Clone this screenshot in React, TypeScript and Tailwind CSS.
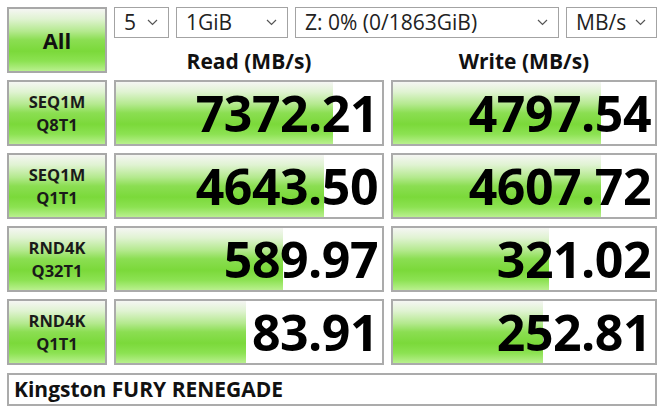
import React from "react";

const GRAD =
  "bg-[linear-gradient(180deg,#f5f6f3_0%,#e0f3d2_16%,#b4e98e_36%,#8bde52_50%,#7bd93a_68%,#8ce252_84%,#b9f08e_100%)]";

function Chevron() {
  return (
    <svg width="11" height="7" viewBox="0 0 11 7" className="shrink-0">
      <polyline points="1,1 5.5,5.5 10,1" fill="none" stroke="#555" strokeWidth="1.2" />
    </svg>
  );
}

function Select({ w, label }: { w: string; label: string }) {
  return (
    <div
      className={`${w} h-[31px] border border-[#a3a3a3] bg-white flex items-center justify-between pl-[9px] pr-[10px] text-[21px] text-[#222] leading-none`}
    >
      <span>{label}</span>
      <Chevron />
    </div>
  );
}

function Label({ a, b }: { a: string; b: string }) {
  return (
    <div
      className={`h-[66px] border-2 border-[#a8a8a8] ${GRAD} flex flex-col items-center justify-center text-[16.5px] font-bold text-[#1a1a1a] leading-[23px]`}
    >
      <span>{a}</span>
      <span>{b}</span>
    </div>
  );
}

function Bar({ value, fill }: { value: string; fill: number }) {
  return (
    <div className="relative h-[66px] border-2 border-[#ababab] bg-white overflow-hidden">
      <div className={`absolute left-0 top-0 bottom-0 ${GRAD}`} style={{ width: fill }} />
      <div className="relative h-full flex items-center justify-end pr-[4px] text-[50px] font-bold text-black leading-none tracking-[-0.5px]">
        {value}
      </div>
    </div>
  );
}

const rows = [
  { a: "SEQ1M", b: "Q8T1", r: "7372.21", rf: 217, w: "4797.54", wf: 208 },
  { a: "SEQ1M", b: "Q1T1", r: "4643.50", rf: 208, w: "4607.72", wf: 208 },
  { a: "RND4K", b: "Q32T1", r: "589.97", rf: 167, w: "321.02", wf: 156 },
  { a: "RND4K", b: "Q1T1", r: "83.91", rf: 130, w: "252.81", wf: 150 },
];

export default function App() {
  return (
    <div
      className="w-[664px] h-[410px] bg-white p-[7px] overflow-hidden"
      style={{ fontFamily: '"Open Sans", "Noto Sans", sans-serif' }}
    >
      <div className="grid grid-cols-[100px_270px_266px] gap-[7px]">
        <div
          className={`h-[66px] border-2 border-[#a8a8a8] ${GRAD} flex items-center justify-center text-[22px] font-bold text-[#111]`}
        >
          All
        </div>
        <div className="col-span-2 h-[66px] flex flex-col">
          <div className="flex gap-[7px]">
            <Select w="w-[55px]" label="5" />
            <Select w="w-[112px]" label="1GiB" />
            <Select w="w-[264px]" label="Z: 0% (0/1863GiB)" />
            <Select w="w-[91px]" label="MB/s" />
          </div>
          <div className="flex gap-[7px] pt-[11px] text-[21px] font-bold text-[#111] leading-[24px]">
            <div className="w-[270px] text-center">Read (MB/s)</div>
            <div className="w-[266px] text-center">Write (MB/s)</div>
          </div>
        </div>
        {rows.map((r, i) => (
          <React.Fragment key={i}>
            <Label a={r.a} b={r.b} />
            <Bar value={r.r} fill={r.rf} />
            <Bar value={r.w} fill={r.wf} />
          </React.Fragment>
        ))}
      </div>
      <div className="mt-[8px] h-[33px] border-2 border-[#ababab] bg-white flex items-center pl-[5px] text-[21px] font-bold text-[#111]">
        Kingston FURY RENEGADE
      </div>
    </div>
  );
}
